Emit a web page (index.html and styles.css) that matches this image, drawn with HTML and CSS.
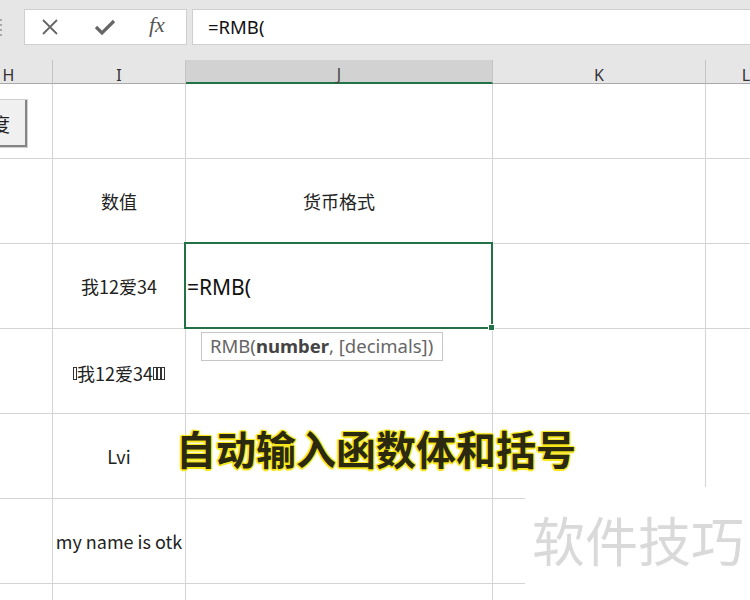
FILE: index.html
```html
<!DOCTYPE html>
<html lang="zh">
<head>
<meta charset="utf-8">
<title>RMB</title>
<link rel="stylesheet" href="styles.css">
</head>
<body>
<div class="app">
  <div class="toolbar">
    <div class="grip"><span></span><span></span><span></span><span></span></div>
    <div class="fbtns">
      <svg class="ico ico-x" width="18" height="18" viewBox="0 0 18 18"><path d="M2 2 L16 16 M16 2 L2 16" stroke="#666" stroke-width="1.8" fill="none"/></svg>
      <svg class="ico ico-ok" width="22" height="18" viewBox="0 0 22 18"><path d="M2 9 L8 15 L20 3" stroke="#666" stroke-width="3.2" fill="none" stroke-linejoin="miter"/></svg>
      <span class="fx">fx</span>
    </div>
    <div class="finput">=RMB(</div>
  </div>

  <div class="sheet">
    <div class="hd hd-h">H</div>
    <div class="hd">I</div>
    <div class="hd hd-active">J</div>
    <div class="hd">K</div>
    <div class="hd hd-l">L</div>

    <div class="c r1"></div><div class="c r1"></div><div class="c r1"></div><div class="c r1"></div><div class="c r1"></div>

    <div class="c"></div><div class="c">数值</div><div class="c">货币格式</div><div class="c"></div><div class="c"></div>

    <div class="c"></div><div class="c">我12爱34</div><div class="c active"><span class="edit">=RMB(</span></div><div class="c"></div><div class="c"></div>

    <div class="c"></div><div class="c low"><span class="tofu"></span>我12爱34<span class="tofu"></span><span class="tofu"></span><span class="tofu"></span></div><div class="c"></div><div class="c"></div><div class="c"></div>

    <div class="c"></div><div class="c">Lvi</div><div class="c"></div><div class="c"></div><div class="c"></div>

    <div class="c"></div><div class="c">my name is otk</div><div class="c"></div><div class="c"></div><div class="c"></div>

    <div class="c"></div><div class="c"></div><div class="c"></div><div class="c"></div><div class="c"></div>
  </div>

  <div class="formbtn">度</div>
  <div class="tip">RMB(<b>number</b>, [decimals])</div>
  <div class="caption">自动输入函数体和括号</div>
  <div class="watermark">软件技巧</div>
</div>
</body>
</html>
```

FILE: styles.css
```css
* { box-sizing: border-box; }
html, body { margin: 0; padding: 0; }
body {
  width: 750px;
  height: 600px;
  overflow: hidden;
  background: #fff;
  font-family: "Noto Sans CJK SC", "Noto Sans", sans-serif;
}
.app {
  position: relative;
  width: 750px;
  height: 600px;
  overflow: hidden;
}
.toolbar {
  height: 60px;
  background: #e6e6e6;
  display: flex;
  align-items: flex-start;
  padding-top: 9px;
}
.grip {
  width: 24px;
  height: 36px;
  display: flex;
  flex-direction: column;
  justify-content: center;
  gap: 3px;
}
.grip span {
  display: block;
  width: 2px;
  height: 2px;
  background: #a8a8a8;
}
.fbtns {
  width: 163px;
  height: 36px;
  background: #fff;
  border: 1px solid #cfcfcf;
  display: flex;
  align-items: center;
  padding-left: 16px;
}
.ico { display: block; flex: none; }
.ico-ok { margin-left: 35px; }
.fx {
  margin-left: 33px;
  font-family: "Liberation Serif", "DejaVu Serif", serif;
  font-style: italic;
  font-size: 22px;
  color: #555;
  line-height: 1;
  margin-top: -4px;
}
.finput {
  flex: 1;
  margin-left: 5px;
  height: 36px;
  background: #fff;
  border: 1px solid #cfcfcf;
  border-right: none;
  padding-left: 15px;
  font-family: "Noto Sans", "Open Sans", sans-serif;
  font-size: 18.5px;
  line-height: 33px;
  color: #111;
}
.sheet {
  margin-left: -35px;
  display: grid;
  grid-template-columns: 88px 133px 307px 213px 80px;
  grid-template-rows: 24px 75px 85px 85px 85px 85px 85px 85px;
}
.hd {
  background: #e6e6e6;
  border-right: 1px solid #c4c4c4;
  border-bottom: 1px solid #a9a9a9;
  font-family: "Noto Sans", "Open Sans", sans-serif;
  font-size: 16px;
  color: #333;
  display: flex;
  align-items: center;
  justify-content: center;
  padding-top: 6px;
}
.hd-l { border-right: none; }
.hd-active {
  background: #d2d2d2;
  border-bottom: 2px solid #217346;
  color: #444;
}
.c {
  border-right: 1px solid #d4d4d4;
  border-bottom: 1px solid #d4d4d4;
  display: flex;
  align-items: center;
  justify-content: center;
  font-size: 18px;
  color: #222;
  white-space: nowrap;
}
.low { padding-top: 4px; }
.tofu {
  display: inline-block;
  width: 4px;
  height: 13px;
  border: 1px solid #333;
}
.active {
  position: relative;
  justify-content: flex-start;
}
.active::after {
  content: "";
  position: absolute;
  left: -2px;
  top: -2px;
  right: -1px;
  bottom: -1px;
  border: 2px solid #217346;
}
.active::before {
  content: "";
  position: absolute;
  right: -3px;
  bottom: -3px;
  width: 5px;
  height: 5px;
  background: #217346;
  border: 1px solid #fff;
  z-index: 2;
}
.edit {
  font-family: "Noto Sans", "Open Sans", sans-serif;
  font-size: 21px;
  color: #111;
  padding-left: 1px;
  padding-top: 2px;
}
.formbtn {
  position: absolute;
  left: -20px;
  top: 99px;
  width: 48px;
  height: 49px;
  background: #f0f0f0;
  border: 1px solid #d0d0d0;
  box-shadow: inset -2px -2px 0 #858585;
  font-size: 19px;
  color: #222;
  display: flex;
  align-items: center;
  justify-content: flex-end;
  padding-right: 17px;
}
.tip {
  position: absolute;
  left: 201px;
  top: 332px;
  width: 242px;
  height: 29px;
  background: #fff;
  border: 1px solid #c6c6c6;
  font-family: "Noto Sans", "Open Sans", sans-serif;
  font-size: 18.5px;
  line-height: 26px;
  color: #666;
  padding-left: 8px;
  white-space: nowrap;
}
.tip b { color: #444; }
.caption {
  position: absolute;
  left: 0;
  right: 0;
  top: 420px;
  text-align: center;
  font-size: 40px;
  font-weight: 700;
  line-height: 56px;
  color: #2b2910;
  padding-left: 2px;
  text-shadow:
    1.5px 0 0 #f7e81e, -1.5px 0 0 #f7e81e, 0 1.5px 0 #f7e81e, 0 -1.5px 0 #f7e81e,
    1px 1px 0 #f7e81e, -1px -1px 0 #f7e81e, 1px -1px 0 #f7e81e, -1px 1px 0 #f7e81e,
    0 0 4px #fff27a;
}
.watermark {
  position: absolute;
  left: 525px;
  top: 487px;
  width: 225px;
  height: 113px;
  background: #fff;
  font-size: 53px;
  color: #d9d9d9;
  padding-left: 7px;
  padding-top: 16px;
  line-height: 72px;
  white-space: nowrap;
}
```
